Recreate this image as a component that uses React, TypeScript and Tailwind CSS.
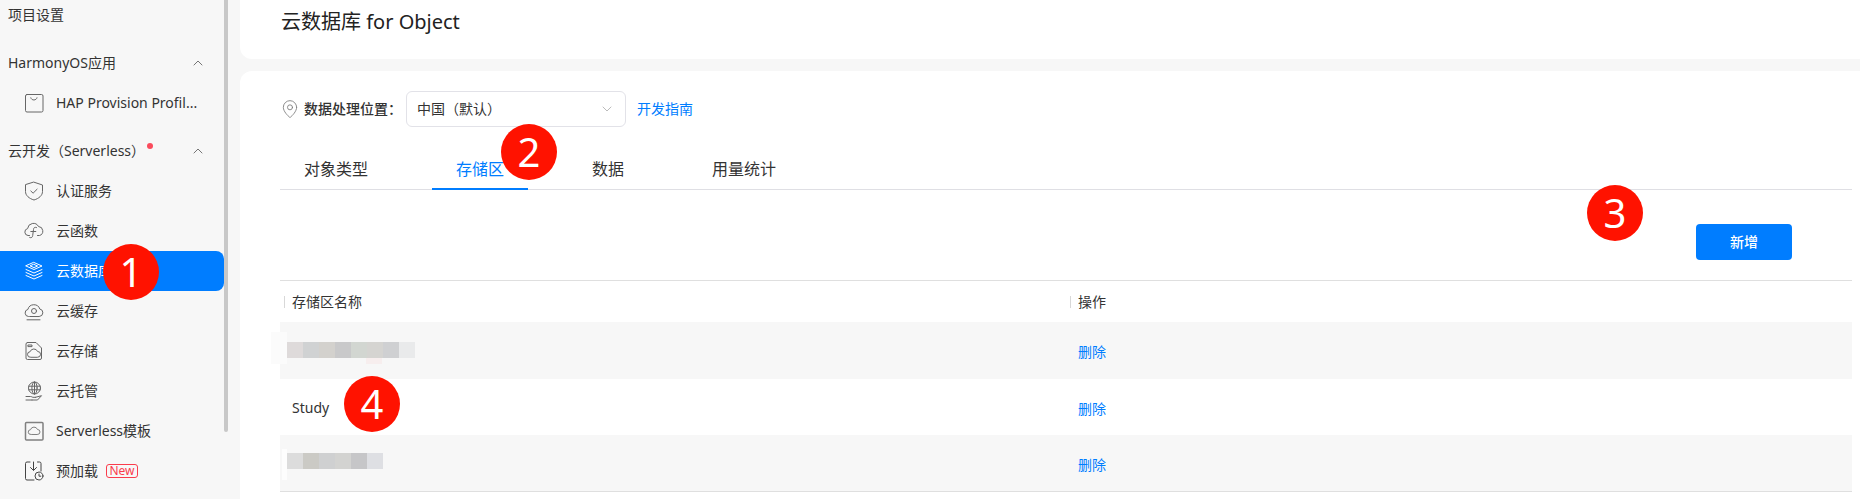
import { ChevronDown, ChevronUp, MapPin } from "lucide-react";
import type { ReactNode } from "react";

const Ico = ({ children, color = "#666666" }: { children: ReactNode; color?: string }) => (
  <svg width="20" height="20" viewBox="0 0 20 20" fill="none" stroke={color} strokeWidth="1" strokeLinecap="round" strokeLinejoin="round" className="shrink-0">
    {children}
  </svg>
);

const icons: Record<string, ReactNode> = {
  hap: (
    <Ico>
      <rect x="1.5" y="1.5" width="17.5" height="17.5" rx="1.5" />
      <path d="M6.8 4.8c.6 3 5.6 3 6.2 0" />
    </Ico>
  ),
  auth: (
    <Ico>
      <path d="M10 1.2 18.5 4v6.5c0 4-3.6 7-8.5 8.5-4.9-1.5-8.5-4.5-8.5-8.5V4z" />
      <path d="m6.8 10 2.3 2.2 4-4" />
    </Ico>
  ),
  fn: (
    <Ico>
      <path d="M5.5 14.5H4a3.5 3.5 0 0 1-.4-6.9A5.8 5.8 0 0 1 14.5 5.5a4.6 4.6 0 0 1 1 9h-2" />
      <path d="M12.5 6.5c-2-.7-2.8.3-3 2l-.8 6c-.2 1.8-1.2 2.7-3 2" />
      <path d="M6.8 10.5h5" />
    </Ico>
  ),
  db: (
    <Ico color="#ffffff">
      <path d="m10 1.5 8 3.5-8 3.5L2 5z" />
      <path d="m10 3.4 3.6 1.6L10 6.6 6.4 5z" />
      <path d="m2 8.5 8 3.5 8-3.5" />
      <path d="m2 11.5 8 3.5 8-3.5" />
      <path d="m2 14.5 8 3.5 8-3.5" />
    </Ico>
  ),
  cache: (
    <Ico>
      <path d="M5 15.5H4.5a3.6 3.6 0 0 1-.6-7.1A6.2 6.2 0 0 1 15.8 8 3.8 3.8 0 0 1 15.5 15.5z" />
      <circle cx="10" cy="10" r="2.5" />
      <path d="M3 18.8h13" />
    </Ico>
  ),
  storage: (
    <Ico>
      <path d="M3.5 1.5h8.5l5.5 5.5v10a1.5 1.5 0 0 1-1.5 1.5H3.5A1.5 1.5 0 0 1 2 17V3a1.5 1.5 0 0 1 1.5-1.5z" />
      <rect x="4.3" y="4" width="3.7" height="1.6" />
      <path d="M6.5 16.3a2.8 2.8 0 0 1-.4-5.6 4 4 0 0 1 7.5-.2 2.9 2.9 0 0 1 .1 5.8z" />
    </Ico>
  ),
  hosting: (
    <Ico>
      <circle cx="10.5" cy="7" r="6" />
      <ellipse cx="10.5" cy="7" rx="2.6" ry="6" />
      <path d="M10.5 1v12M4.7 5.2h11.6M4.7 8.8h11.6" />
      <path d="M2 15.5h4.5c1 0 1.5.4 2.3.8h2.7M8 19H2M11.5 16.3l6-1.6-4 4.3H8" />
    </Ico>
  ),
  template: (
    <Ico color="#808080">
      <rect x="1.5" y="1.5" width="17.5" height="17.5" rx="1" strokeWidth="1.5" />
      <path d="M6.8 13.5a2.4 2.4 0 0 1-.3-4.8 3.7 3.7 0 0 1 7-.2 2.5 2.5 0 0 1 0 5z" />
    </Ico>
  ),
  preload: (
    <Ico color="#444444">
      <path d="M6 1H3a1.5 1.5 0 0 0-1.5 1.5v15A1.5 1.5 0 0 0 3 19h7" />
      <path d="M13.5 1h2A1.5 1.5 0 0 1 17 2.5V10" />
      <path d="M9.5 1v8M6.5 6.5l3 3 3-3" />
      <circle cx="15" cy="15" r="4" />
      <path d="M15 13v2.2h1.8" />
    </Ico>
  ),
};

const menu = [
  { key: "auth", label: "认证服务" },
  { key: "fn", label: "云函数" },
  { key: "db", label: "云数据库", active: true },
  { key: "cache", label: "云缓存" },
  { key: "storage", label: "云存储" },
  { key: "hosting", label: "云托管" },
  { key: "template", label: "Serverless模板" },
];

const tabs = ["对象类型", "存储区", "数据", "用量统计"];

const Marker = ({ n, className }: { n: number; className: string }) => (
  <div className={`absolute flex h-[56px] w-[56px] items-center justify-center rounded-full bg-[#ff1200] text-[40px] leading-none text-white ${className}`}>
    {n}
  </div>
);

const MenuItem = ({ icon, label, active }: { icon: ReactNode; label: ReactNode; active?: boolean }) => (
  <div className={`flex h-10 w-[224px] items-center gap-3 rounded-r-lg pl-6 ${active ? "bg-[#007dff] text-white" : "text-[#333333]"}`}>
    {icon}
    {label}
  </div>
);

const Sidebar = () => (
  <aside className="relative h-full w-[240px] shrink-0 overflow-hidden text-sm">
    <div className="-mt-[5px] flex flex-col gap-2">
      <div className="flex h-10 items-center pl-2 text-[#333333]">项目设置</div>
      <div>
        <div className="flex h-10 w-[224px] items-center justify-between pl-2 pr-[18px] text-[#333333]">
          <span>HarmonyOS应用</span>
          <ChevronUp size={16} strokeWidth={1} />
        </div>
        <MenuItem icon={icons.hap} label={<span className="whitespace-nowrap">HAP Provision Profil...</span>} />
      </div>
      <div>
        <div className="flex h-10 w-[224px] items-center justify-between pl-2 pr-[18px] text-[#333333]">
          <span className="flex items-start">
            云开发（Serverless）
            <span className="ml-[2px] mt-0.5 h-1.5 w-1.5 rounded-full bg-[#fa4b5c]" />
          </span>
          <ChevronUp size={16} strokeWidth={1} />
        </div>
        {menu.map((m) => (
          <MenuItem key={m.key} icon={icons[m.key]} label={m.label} active={m.active} />
        ))}
        <MenuItem
          icon={icons.preload}
          label={
            <span className="flex items-center gap-2">
              预加载
              <span className="flex h-[14px] w-[32px] items-center justify-center rounded-[3px] border border-[#fa3c4c] text-xs text-[#fa3c4c]">New</span>
            </span>
          }
        />
      </div>
    </div>
    {/* scrollbar */}
    <div className="absolute left-[224px] top-0 h-[432px] w-[4px] rounded-b-sm bg-[#c8c8c8]" />
  </aside>
);

const TableRow = ({ name, striped, h }: { name: ReactNode; striped?: boolean; h: string }) => (
  <div className={`grid grid-cols-[786px_1fr] items-center ${h} ${striped ? "bg-[#f7f7f7]" : "bg-white"}`}>
    <div className="pl-3 pt-[2px] text-[#333333]">{name}</div>
    <div className="pl-3 pt-[3px] text-[#007dff]">删除</div>
  </div>
);

export default function App() {
  return (
    <div
      className="relative flex h-[499px] w-[1860px] overflow-hidden bg-[#f7f7f7] text-sm"
      style={{ fontFamily: '"Noto Sans", "Noto Sans CJK SC", sans-serif' }}
    >
      <Sidebar />
      <main className="flex min-w-0 flex-1 flex-col gap-3">
        <div className="flex h-[59px] items-start rounded-bl-xl bg-white pl-[41px] pt-2.5 text-xl leading-6 text-[#222222]">云数据库 for Object</div>
        <div className="flex-1 rounded-tl-xl bg-white pl-10 pr-2 pt-5">
          <div className="flex h-9 items-center">
            <MapPin size={20} strokeWidth={1} className="text-[#777777]" />
            <span className="ml-[4px] w-[102px] font-medium text-[#333333]">数据处理位置：</span>
            <div className="flex h-9 w-[220px] items-center justify-between rounded-md border border-[#e2e2e8] pl-[10px] pr-2.5 text-[#333333]">
              <span>中国（默认）</span>
              <ChevronDown size={16} strokeWidth={1} className="text-[#999999]" />
            </div>
            <a className="ml-[11px] text-[#007dff]">开发指南</a>
          </div>
          <div className="mt-5 flex h-[43px] gap-10 border-b border-[#dfdfe4]">
            {tabs.map((t) => (
              <div key={t} className={`flex h-[43px] items-center px-6 text-base ${t === "存储区" ? "border-b-2 border-[#007dff] pt-[2px] text-[#007dff]" : "text-[#333333]"}`}>
                {t}
              </div>
            ))}
          </div>
          <div className="flex h-[91px] items-start justify-end border-b border-[#dfdfdf] pr-[60px] pt-[34px]">
            <button className="h-9 w-[96px] rounded bg-[#007dff] text-sm font-medium text-white">新增</button>
          </div>
          <div className="grid h-[41px] grid-cols-[786px_1fr] items-center text-[#333333]">
            <div className="ml-1 flex items-center gap-[7px]">
              <span className="h-3 w-px bg-[#d8d8d8]" />
              存储区名称
            </div>
            <div className="ml-1 flex items-center gap-[7px]">
              <span className="h-3 w-px bg-[#d8d8d8]" />
              操作
            </div>
          </div>
          <TableRow striped h="h-[57px]" name={null} />
          <TableRow h="h-[56px]" name="Study" />
          <TableRow striped h="h-[56px]" name={null} />
          <div className="h-px bg-[#dfdfdf]" />
        </div>
      </main>

      {/* mosaic over the blurred bucket names */}
      <div className="absolute left-[271px] top-[332px] h-[32px] w-[16px] bg-[#fbfbfb]" />
      <div className="absolute left-[287px] top-[342px] flex h-[16px]">
        {["#dedada", "#d0d2d3", "#d3d1cd", "#c9c9ca", "#d2d6d1", "#d5d4d1", "#cfd0d2", "#e9eaeb"].map((c, i) => (
          <div key={i} className="h-full w-[16px]" style={{ backgroundColor: c }} />
        ))}
      </div>
      <div className="absolute left-[366px] top-[358px] h-[6px] w-[16px] bg-[#f7eeee]" />
      <div className="absolute left-[282px] top-[449px] h-[31px] w-[5px] bg-[#fdfdfd]" />
      <div className="absolute left-[287px] top-[453px] flex h-[16px]">
        {["#dcdcdc", "#cbcac5", "#cfd0d1", "#d3d3d1", "#c6c6c8", "#dedfe3"].map((c, i) => (
          <div key={i} className="h-full w-[16px]" style={{ backgroundColor: c }} />
        ))}
      </div>

      <Marker n={1} className="left-[103px] top-[244px]" />
      <Marker n={2} className="left-[501px] top-[124px]" />
      <Marker n={3} className="left-[1587px] top-[185px]" />
      <Marker n={4} className="left-[344px] top-[376px]" />
    </div>
  );
}
